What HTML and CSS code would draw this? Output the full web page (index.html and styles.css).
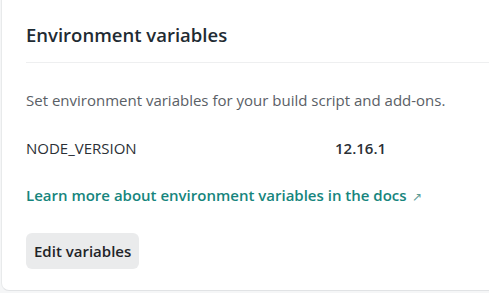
FILE: index.html
```html
<!doctype html>
<html lang="en-US">
    <head>
        <meta charset="utf-8">
        <meta name="viewport" content="width=device-width, initial-scale=1.0">
        <title>Environment variables</title>
        <link rel="stylesheet" href="styles.css">
    </head>
    <body>
        <section class="card">
            <header class="card-header">
                <h2>Environment variables</h2>
            </header>
            <div class="card-body">
                <p class="description">Set environment variables for your build script and add-ons.</p>
                <dl class="vars">
                    <dt>NODE_VERSION</dt>
                    <dd>12.16.1</dd>
                </dl>
                <p class="docs">
                    <a href="#">Learn more about environment variables in the docs <span class="arrow">&#8599;</span></a>
                </p>
                <button type="button" class="btn">Edit variables</button>
            </div>
        </section>
    </body>
</html>
```

FILE: styles.css
```css
* {
    padding: 0;
    margin: 0;
    box-sizing: border-box;
    font-family: "Segoe UI", "Open Sans", sans-serif;
}

body {
    background: #f5f6f7;
    padding: 0 0 2px 1px;
    overflow: hidden;
}

.card {
    background: #fff;
    border-left: 1px solid #e8eaeb;
    border-bottom: 1px solid #e1e3e5;
    border-radius: 0 0 0 8px;
    height: 291px;
    padding-left: 24px;
}

.card-header {
    padding: 22px 0 14px;
    border-bottom: 1px solid #eeeff0;
}

.card-header h2 {
    font-size: 18.5px;
    font-weight: 600;
    color: #1f2b33;
    line-height: 26px;
}

.card-body {
    padding-top: 27px;
}

.description {
    font-size: 15px;
    color: #5a6066;
    line-height: 20px;
}

.vars {
    display: grid;
    grid-template-columns: 309px 1fr;
    margin-top: 28px;
    font-size: 15px;
    line-height: 20px;
    color: #2b3036;
}

.vars dd {
    font-weight: 600;
}

.docs {
    margin-top: 27px;
    font-size: 15px;
    line-height: 20px;
}

.docs a {
    color: #16857d;
    font-weight: 600;
    text-decoration: none;
}

.arrow {
    font-size: 12px;
    font-weight: 400;
    color: #5d9c96;
    margin-left: 2px;
}

.btn {
    margin-top: 26px;
    background: #eaebec;
    color: #1f2428;
    font-size: 15px;
    font-weight: 600;
    line-height: 20px;
    padding: 8px 8px;
    border: none;
    border-radius: 6px;
}
```
